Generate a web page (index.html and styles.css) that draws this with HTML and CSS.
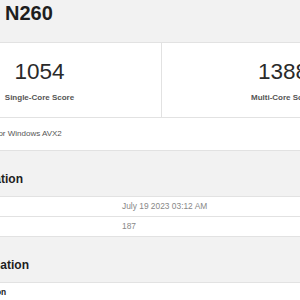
FILE: index.html
```html
<!DOCTYPE html>
<html lang="en">
<head>
    <meta charset="UTF-8">
    <meta name="viewport" content="width=device-width, initial-scale=1.0">
    <title>N260 - Geekbench</title>
    <link rel="stylesheet" href="styles.css">
</head>
<body>
    <div class="page">
        <h1 class="title">N260</h1>

        <div class="card">
            <div class="scores">
                <div class="score">
                    <div class="score-value">1054</div>
                    <div class="score-label">Single-Core Score</div>
                </div>
                <div class="score">
                    <div class="score-value">1388</div>
                    <div class="score-label">Multi-Core Score</div>
                </div>
            </div>
            <div class="card-footer">Geekbench 6.1.0 for Windows AVX2</div>
        </div>

        <h3 class="section-title">Result Information</h3>
        <div class="info-table">
            <div class="row">
                <div class="name">Upload Date</div>
                <div class="value">July 19 2023 03:12 AM</div>
            </div>
            <div class="row">
                <div class="name">Views</div>
                <div class="value">187</div>
            </div>
        </div>

        <h3 class="section-title">System Information</h3>
        <div class="info-table">
            <div class="row head">
                <div class="name">System Information</div>
                <div class="value"></div>
            </div>
        </div>
    </div>
</body>
</html>
```

FILE: styles.css
```css
body {
    margin: 0;
    padding: 0;
    background: #f2f2f2;
    color: #222;
    font-family: 'Liberation Sans', Arial, sans-serif;
    overflow: hidden;
}

.page {
    width: 488px;
    margin-left: -83px;
}

.title {
    margin: 0;
    padding: 2px 0 17px 88px;
    font-size: 20px;
    line-height: 23px;
    font-weight: 700;
    color: #1e1e1e;
}

.card {
    background: #fff;
    border: 1px solid #e2e2e2;
}

.scores {
    display: grid;
    grid-template-columns: 1fr 1fr;
}

.score {
    padding: 16px 0 14px;
    text-align: center;
}

.score + .score {
    border-left: 1px solid #e2e2e2;
}

.score-value {
    font-size: 22.5px;
    line-height: 26px;
    color: #2a2a2a;
}

.score-label {
    margin-top: 8px;
    font-size: 8px;
    line-height: 10px;
    font-weight: 700;
    color: #555;
}

.card-footer {
    border-top: 1px solid #e2e2e2;
    padding: 10px 10px 10px 15px;
    font-size: 8px;
    line-height: 12px;
    color: #555;
}

.section-title {
    margin: 21px 0 9px;
    font-size: 12px;
    line-height: 15px;
    font-weight: 700;
    color: #1e1e1e;
}

.info-table {
    background: #fff;
    border: 1px solid #e2e2e2;
    border-bottom: none;
}

.row {
    display: grid;
    grid-template-columns: 204px 1fr;
    border-bottom: 1px solid #e2e2e2;
    font-size: 8.4px;
    line-height: 19px;
    color: #888;
}

.name {
    padding-left: 10px;
    color: #444;
}

.row.head .name {
    font-weight: 700;
    color: #222;
}
```
